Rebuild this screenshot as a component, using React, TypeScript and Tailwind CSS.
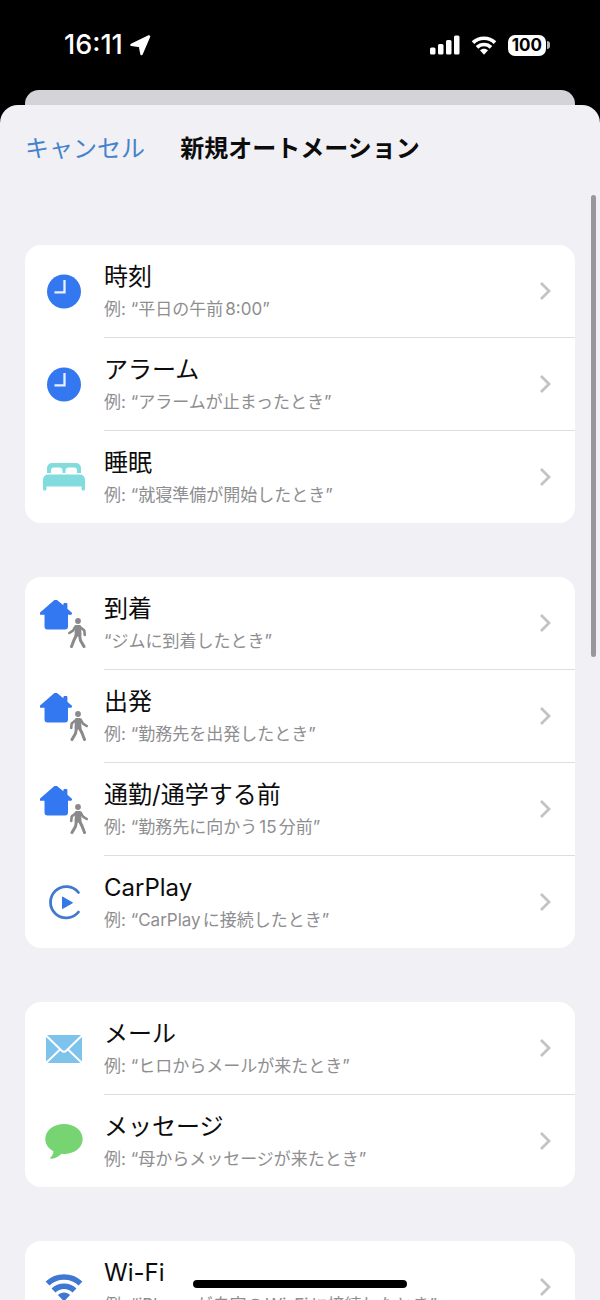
import type { ReactNode } from "react";

type Item = {
  title: string;
  example: string;
  icon: ReactNode;
};

function ClockIcon() {
  return (
    <svg width="48" height="48" viewBox="0 0 48 48" fill="none">
      <circle cx="24" cy="23.500" r="17" fill="#3478f1" />
      <path d="M24.500 12v12.300H14.500" stroke="#e8f1ff" strokeWidth="2.300" />
    </svg>
  );
}

function BedIcon() {
  return (
    <svg width="48" height="48" viewBox="0 0 48 48" fill="#82dbdc">
      <path d="M7 20v-5a5 5 0 0 1 5-5h24a5 5 0 0 1 5 5v5h-4v-2.500a3 3 0 0 0-3-3h-5.500a3 3 0 0 0-3 3V20h-3v-2.500a3 3 0 0 0-3-3H14a3 3 0 0 0-3 3V20Z" />
      <path d="M3 26.500a5 5 0 0 1 5-5h32a5 5 0 0 1 5 5V36a1.500 1.500 0 0 1-1.500 1.500h-.5a1.500 1.500 0 0 1-1.500-1.500v-2.500h-35V36A1.500 1.500 0 0 1 5 37.500h-.5A1.500 1.500 0 0 1 3 36Z" />
    </svg>
  );
}

function HouseWalkIcon({ leaving = false }: { leaving?: boolean }) {
  return (
    <svg width="48" height="48" viewBox="0 0 48 48">
      <path
        d="M14.400 0a2 2 0 0 1 2.600 0l6.400 5.300V4a1 1 0 0 1 1-1h2a1 1 0 0 1 1 1v4.700l4.200 3.800c1 .9.500 2.200-.7 2.200h-2.900v11.800a3 3 0 0 1-3 3H7.500a3 3 0 0 1-3-3V14.700H.8c-1.200 0-1.700-1.300-.7-2.200Z"
        fill="#3478f1"
      />
      <g
        transform={leaving ? "translate(1 0)" : "translate(75 0) scale(-1 1)"}
        fill="none"
        stroke="#8a8a8d"
        strokeLinecap="round"
        strokeLinejoin="round"
      >
        <circle cx="37" cy="21" r="2.900" fill="#8a8a8d" stroke="none" />
        <path d="M35.500 26.500h3l.5 8.500h-4Z" fill="#8a8a8d" strokeWidth="3" />
        <path d="M35 27l-4.300 3.500-.5 4.500" strokeWidth="2.600" />
        <path d="M39.500 26.500l2.500 4.200 3.700 2.300" strokeWidth="2.600" />
        <path d="M35.500 35l-1 5.500-3.500 6" strokeWidth="3" />
        <path d="M38.500 35l2.500 5 2.500 6.500" strokeWidth="3" />
      </g>
    </svg>
  );
}

function CarPlayIcon() {
  return (
    <svg width="48" height="48" viewBox="0 0 48 48">
      <path
        d="M38.500 14.500A15.700 15.700 0 1 0 38.500 34"
        fill="none"
        stroke="#4178d0"
        strokeWidth="2.800"
        strokeLinecap="round"
      />
      <path d="M22.500 19v11.500l10-5.700Z" fill="#3478e5" stroke="#3478e5" strokeWidth="1" strokeLinejoin="round" />
    </svg>
  );
}

function MailIcon() {
  return (
    <svg width="48" height="48" viewBox="0 0 48 48">
      <rect x="6" y="10" width="36" height="28" rx="1.500" fill="#7dc3ec" />
      <path
        d="M6 10.500l15.500 15q2.500 2.500 5 0L42 10.500M6 38l14-13.500M42 38L28 24.500"
        fill="none"
        stroke="#fff"
        strokeWidth="2"
      />
    </svg>
  );
}

function MessageIcon() {
  return (
    <svg width="48" height="48" viewBox="0 0 48 48" fill="#76d572">
      <path d="M24 7C13.500 7 5.300 13.500 5.300 22c0 5 3 9.500 8 12.200.3 2.300-1 4.300-2.700 6-.7.800-.2 1.600.8 1.500 4.300-.3 7.800-2.300 10-4.900.8.100 1.700.2 2.600.2 10.500 0 18.700-6.500 18.700-15S34.500 7 24 7Z" />
    </svg>
  );
}

function WifiIcon({ size, color }: { size: number; color: string }) {
  return (
    <svg width={size} height={size} viewBox="0 0 48 48" fill="none" stroke={color}>
      <path d="M7.500 20.500a24 24 0 0 1 33 0" strokeWidth="5.500" />
      <path d="M13.500 27.500a15 15 0 0 1 21 0" strokeWidth="5.500" />
      <path d="M24 29.500c2.400 0 4.500.9 6.100 2.400L24 38.500l-6.100-6.600c1.600-1.500 3.700-2.400 6.100-2.400Z" fill={color} stroke="none" />
    </svg>
  );
}

function Chevron() {
  return (
    <svg width="12" height="20" viewBox="0 0 12 20" fill="none" className="shrink-0">
      <path d="M2 2l8 8-8 8" stroke="#c3c3c5" strokeWidth="2.800" />
    </svg>
  );
}

const groups: Item[][] = [
  [
    { title: "時刻", example: "例: “平日の午前8:00”", icon: <ClockIcon /> },
    { title: "アラーム", example: "例: “アラームが止まったとき”", icon: <ClockIcon /> },
    { title: "睡眠", example: "例: “就寝準備が開始したとき”", icon: <BedIcon /> },
  ],
  [
    { title: "到着", example: "“ジムに到着したとき”", icon: <HouseWalkIcon /> },
    { title: "出発", example: "例: “勤務先を出発したとき”", icon: <HouseWalkIcon leaving /> },
    { title: "通勤/通学する前", example: "例: “勤務先に向かう15分前”", icon: <HouseWalkIcon leaving /> },
    { title: "CarPlay", example: "例: “CarPlayに接続したとき”", icon: <CarPlayIcon /> },
  ],
  [
    { title: "メール", example: "例: “ヒロからメールが来たとき”", icon: <MailIcon /> },
    { title: "メッセージ", example: "例: “母からメッセージが来たとき”", icon: <MessageIcon /> },
  ],
  [
    { title: "Wi-Fi", example: "例: “iPhoneが自宅のWi-Fiに接続したとき”", icon: <WifiIcon size={48} color="#3f78d2" /> },
  ],
];

function Row({ item, last }: { item: Item; last: boolean }) {
  return (
    <li>
      <button type="button" className="flex w-full items-stretch pl-[15px] text-left">
        <span className="flex w-16 shrink-0 items-center">{item.icon}</span>
        <span
          className={`flex min-w-0 flex-1 items-center border-[#dedee0] pr-6 ${last ? "" : "border-b"}`}
        >
          <span className="min-w-0 flex-1 pt-4 pb-3 [text-autospace:normal]">
            <span className="block text-[24px] leading-8 text-[#0c0c0d]">{item.title}</span>
            <span className="block text-[17px] leading-8 whitespace-nowrap text-[#8e8e91]">{item.example}</span>
          </span>
          <Chevron />
        </span>
      </button>
    </li>
  );
}

function StatusBar() {
  return (
    <div className="flex h-[90px] shrink-0 items-center justify-between pr-[50px] pl-16 text-white">
      <div className="flex items-center gap-1.5">
        <span className="text-[27px] leading-8 font-medium">16:11</span>
        <svg width="22" height="22" viewBox="0 0 22 22" fill="#fff" stroke="#fff" strokeWidth="2.500" strokeLinejoin="round">
          <path d="M2.500 10.800L20 2.500l-7.500 17.500L11 12Z" />
        </svg>
      </div>
      <div className="flex items-center">
        <svg width="30" height="20" viewBox="0 0 30 20" fill="#fff" className="mr-2">
          <rect x="0" y="12.500" width="5.500" height="7" rx="1.500" />
          <rect x="8" y="9" width="5.500" height="10.500" rx="1.500" />
          <rect x="16" y="5" width="5.500" height="14.500" rx="1.500" />
          <rect x="24" y="0.500" width="5.500" height="19" rx="1.500" />
        </svg>
        <WifiIcon size={32} color="#fff" />
        <div className="ml-2 flex items-center">
          <span className="rounded-[7px] bg-white px-1 text-[17px] leading-[21px] font-bold text-black">100</span>
          <span className="ml-px h-2 w-[3px] rounded-r-full bg-[#b5b5b5]" />
        </div>
      </div>
    </div>
  );
}

export default function App() {
  return (
    <div className="relative flex h-screen flex-col overflow-hidden bg-black font-[Inter,'Noto_Sans_CJK_JP',sans-serif]">
      <StatusBar />

      {/* Sheet stacked behind */}
      <div className="mx-[25px] h-[15px] shrink-0 rounded-t-[14px] bg-[#d4d3d8]" />

      <main className="relative min-h-0 flex-1 overflow-hidden rounded-t-[18px] bg-[#f1f0f5]">
        <header className="grid grid-cols-[1fr_auto_1fr] items-center px-[25px] pt-[26px] pb-[62px]">
          <button type="button" className="justify-self-start text-[24px] leading-9 whitespace-nowrap text-[#4383cc]">
            キャンセル
          </button>
          <h1 className="text-[24px] leading-9 font-bold whitespace-nowrap text-[#0c0c0d]">新規オートメーション</h1>
        </header>

        <div className="flex flex-col gap-[54px] px-[25px] pt-4">
          {groups.map((group, i) => (
            <ul key={i} className="overflow-hidden rounded-[16px] bg-white">
              {group.map((item, j) => (
                <Row key={item.title} item={item} last={j === group.length - 1} />
              ))}
            </ul>
          ))}
        </div>

        {/* Scroll indicator */}
        <div className="absolute top-[90px] right-1 h-[462px] w-[5px] rounded-full bg-[#98979b]" />
      </main>

      {/* Home indicator */}
      <div className="absolute bottom-3 left-1/2 h-2 w-[214px] -translate-x-1/2 rounded-full bg-black" />
    </div>
  );
}
